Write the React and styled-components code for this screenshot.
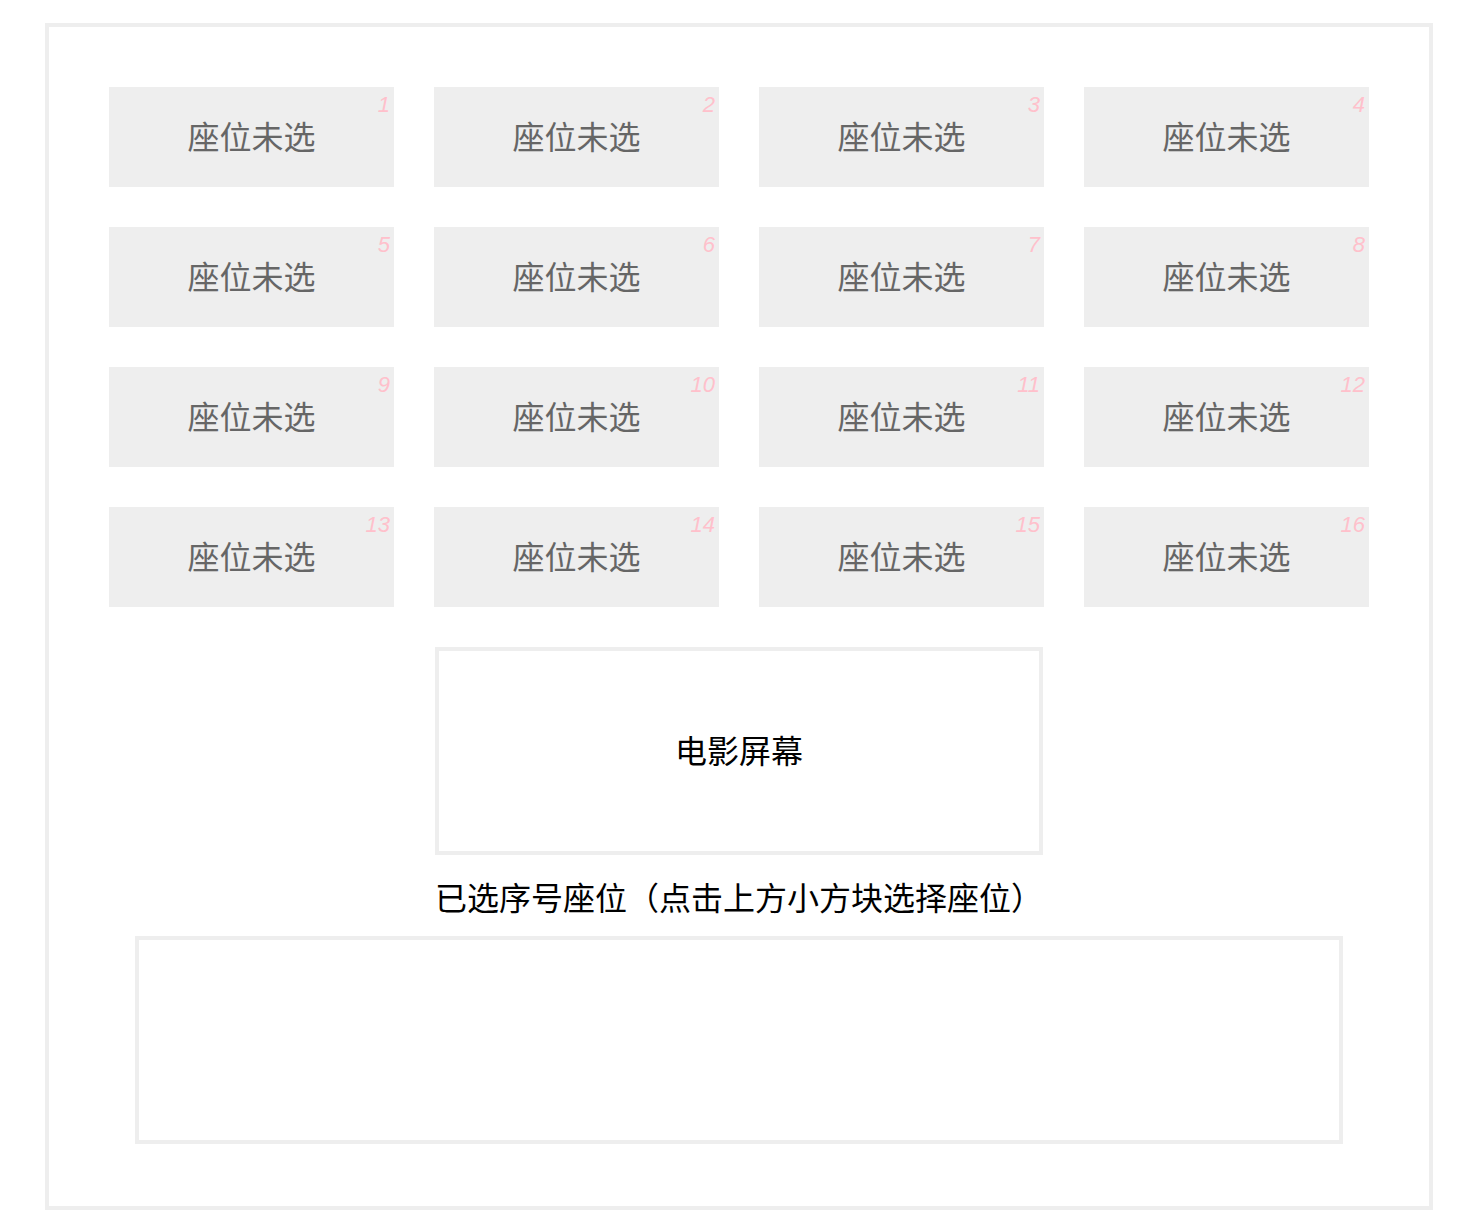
import styled, { createGlobalStyle } from "styled-components";

const GlobalStyle = createGlobalStyle`
  body {
    margin: 0;
    background: #ffffff;
    font-family: "Liberation Sans", "Noto Sans CJK SC", sans-serif;
  }
`;

const seats = Array.from({ length: 16 }, (_, i) => i + 1);

export default function App() {
  return (
    <>
      <GlobalStyle />
      <SCContainer>
        <SCSeatGrid>
          {seats.map((n) => (
            <SCSeat key={n}>
              座位未选
              <SCSeatNumber>{n}</SCSeatNumber>
            </SCSeat>
          ))}
        </SCSeatGrid>

        <SCScreen>电影屏幕</SCScreen>

        <SCHint>已选序号座位（点击上方小方块选择座位）</SCHint>

        <SCSelected />
      </SCContainer>
    </>
  );
}

const SCContainer = styled.div`
  width: 1388px;
  margin: 23px auto 10px;
  border: 4px solid #eeeeee;
  padding: 60px 60px 62px;
  box-sizing: border-box;
  display: flex;
  flex-direction: column;
  align-items: center;
`;

const SCSeatGrid = styled.div`
  display: grid;
  grid-template-columns: repeat(4, 285px);
  grid-auto-rows: 100px;
  gap: 40px;
`;

const SCSeat = styled.div`
  position: relative;
  box-sizing: border-box;
  padding-bottom: 4px;
  background: #eeeeee;
  display: flex;
  justify-content: center;
  align-items: center;
  font-family: "Noto Sans CJK SC", sans-serif;
  font-size: 32px;
  color: #666666;
  cursor: pointer;
`;

const SCSeatNumber = styled.span`
  position: absolute;
  top: 5px;
  right: 4px;
  font-family: "Liberation Sans", sans-serif;
  font-style: italic;
  font-size: 22px;
  line-height: 25px;
  color: #ffc0cb;
`;

const SCScreen = styled.div`
  width: 600px;
  height: 200px;
  margin-top: 40px;
  padding-bottom: 4px;
  box-sizing: content-box;
  height: 196px;
  border: 4px solid #eeeeee;
  display: flex;
  justify-content: center;
  align-items: center;
  font-family: "Noto Sans CJK SC", sans-serif;
  font-size: 32px;
  color: #000000;
`;

const SCHint = styled.p`
  width: 608px;
  margin: 20px 0 18px;
  font-family: "Noto Sans CJK SC", sans-serif;
  font-size: 32px;
  line-height: 43px;
  color: #000000;
`;

const SCSelected = styled.div`
  width: 1200px;
  height: 200px;
  border: 4px solid #eeeeee;
`;
